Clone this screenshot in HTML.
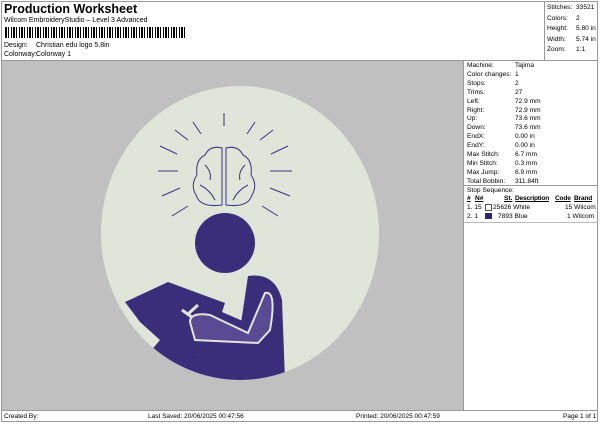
<!DOCTYPE html>
<html><head><style>
body{margin:0;width:600px;height:424px;background:#fff;font-family:"Liberation Sans",Arial,sans-serif;position:relative;overflow:hidden;color:#000}
.a{position:absolute;white-space:nowrap}
.s{font-size:7px}
.t{font-size:6.6px}
</style></head><body>
<div class="a" style="left:1px;top:1px;width:597px;height:421px;border:1px solid #999;box-sizing:border-box"></div>
<div class="a" style="left:4px;top:2px;font-size:12.5px;font-weight:bold">Production Worksheet</div>
<div class="a s" style="left:4px;top:17px">Wilcom EmbroideryStudio – Level 3 Advanced</div>
<div class="a" style="left:5px;top:27px;width:180px;height:11px;background:repeating-linear-gradient(90deg,#000 0 2px,#fff 2px 3px,#000 3px 4px,#fff 4px 6px,#000 6px 7px,#fff 7px 8px)"></div>
<div class="a s" style="left:4px;top:42px">Design:</div><div class="a s" style="left:36px;top:42px">Christian edu logo 5.8in</div>
<div class="a s" style="left:4px;top:51px">Colonway:</div><div class="a s" style="left:36px;top:51px">Colorway 1</div>
<div class="a" style="left:544px;top:1px;width:1px;height:59px;background:#999"></div>
<div class="a t" style="left:547px;top:3px;line-height:10.5px">Stitches:<br>Colors:<br>Height:<br>Width:<br>Zoom:</div>
<div class="a t" style="left:576px;top:3px;line-height:10.5px">33521<br>2<br>5.80 in<br>5.74 in<br>1:1</div>
<div class="a" style="left:2px;top:60px;width:461px;height:350px;background:#c0c0c0;border-top:1px solid #999"></div>
<div class="a" style="left:463px;top:60px;width:135px;height:1px;background:#999"></div>
<div class="a" style="left:463px;top:60px;width:1px;height:350px;background:#999"></div>
<div class="a t" style="left:467px;top:62px;line-height:8.9px">Machine:<br>Color changes:<br>Stops:<br>Trims:<br>Left:<br>Right:<br>Up:<br>Down:<br>EndX:<br>EndY:<br>Max Stitch:<br>Min Stitch:<br>Max Jump:<br>Total Bobbin:</div>
<div class="a t" style="left:515px;top:62px;line-height:8.9px">Tajima<br>1<br>2<br>27<br>72.9 mm<br>72.9 mm<br>73.6 mm<br>73.6 mm<br>0.00 in<br>0.00 in<br>6.7 mm<br>0.3 mm<br>6.9 mm<br>311.84ft</div>
<div class="a" style="left:464px;top:185px;width:134px;height:1px;background:#999"></div>
<div class="a t" style="left:467px;top:187px">Stop Sequence:</div>
<div class="a t" style="left:467px;top:195px;font-weight:bold;text-decoration:underline">#</div>
<div class="a t" style="left:475px;top:195px;font-weight:bold;text-decoration:underline">N#</div>
<div class="a t" style="left:504px;top:195px;font-weight:bold;text-decoration:underline">St.</div>
<div class="a t" style="left:515px;top:195px;font-weight:bold;text-decoration:underline;letter-spacing:-0.2px">Description</div>
<div class="a t" style="left:555px;top:195px;font-weight:bold;text-decoration:underline;letter-spacing:-0.2px">Code</div>
<div class="a t" style="left:574px;top:195px;font-weight:bold;text-decoration:underline;letter-spacing:-0.2px">Brand</div>
<div class="a t" style="left:467px;top:204px">1. 15</div>
<div class="a" style="left:485px;top:204px;width:5px;height:5px;border:1px solid #555;background:#fff"></div>
<div class="a t" style="left:493px;top:204px">25626 White</div>
<div class="a t" style="left:565px;top:204px">15 Wilcom</div>
<div class="a t" style="left:467px;top:213px">2. 1</div>
<div class="a" style="left:485px;top:213px;width:7px;height:6px;background:#2e2470"></div>
<div class="a t" style="left:498px;top:213px">7893 Blue</div>
<div class="a t" style="left:567px;top:213px">1 Wilcom</div>
<div class="a" style="left:464px;top:222px;width:134px;height:1px;background:#bbb"></div>
<div class="a" style="left:2px;top:410px;width:596px;height:1px;background:#999"></div>
<div class="a" style="left:4px;top:413px;font-size:6.5px">Created By:</div>
<div class="a" style="left:148px;top:413px;font-size:6.5px">Last Saved: 20/06/2025 00:47:56</div>
<div class="a" style="left:356px;top:413px;font-size:6.5px">Printed: 20/06/2025 00:47:59</div>
<div class="a" style="left:563px;top:413px;font-size:6.5px">Page 1 of 1</div>
<svg class="a" style="left:0;top:0" width="600" height="424" viewBox="0 0 600 424">
<defs><clipPath id="c"><ellipse cx="240" cy="233" rx="139" ry="147"/></clipPath></defs>
<ellipse cx="240" cy="233" rx="139" ry="147" fill="#dfe5d9"/>
<g clip-path="url(#c)" fill="#3a2d7a">
<circle cx="225" cy="243" r="30"/>
<path d="M248 276 Q275 272 282 300 L285 380 L150 380 L160 350 L200 355 L240 330 Z"/>
<path d="M125 302 L168 282 L225 303 L222 312 L245 322 L240 342 L200 355 L150 352 L160 340 L140 322 Z"/>
<path d="M182 310 L200 323" stroke="#dfe5d9" stroke-width="3"/>
<path d="M188 314 L198 305" stroke="#dfe5d9" stroke-width="3"/>
<path d="M190 322 Q190 312 210 315 L248 333 L265 293 Q277 290 270 330 L258 343 L195 340 Z" fill="#5a4a94" stroke="#dfe5d9" stroke-width="2"/>
</g>
<g fill="none" stroke="#3a3580" stroke-width="1">
<path d="M222 148 Q210 145 205 155 Q195 160 197 175 Q190 185 196 195 Q200 208 222 205 Z"/>
<path d="M226 148 Q238 145 243 155 Q253 160 251 175 Q258 185 252 195 Q248 208 226 205 Z"/>
<path d="M205 165 Q212 172 210 180 M245 165 Q238 172 240 180 M200 185 Q210 190 215 200 M248 185 Q238 190 233 200"/>
<path d="M224 113 V126 M193 122 L201 134 M255 122 L247 134 M175 130 L188 140 M273 130 L260 140 M160 146 L177 154 M288 146 L271 154 M158 171 H178 M270 171 H292 M162 196 L180 188 M290 196 L270 188 M172 216 L188 206 M278 216 L262 206"/>
</g>
</svg>
</body></html>
